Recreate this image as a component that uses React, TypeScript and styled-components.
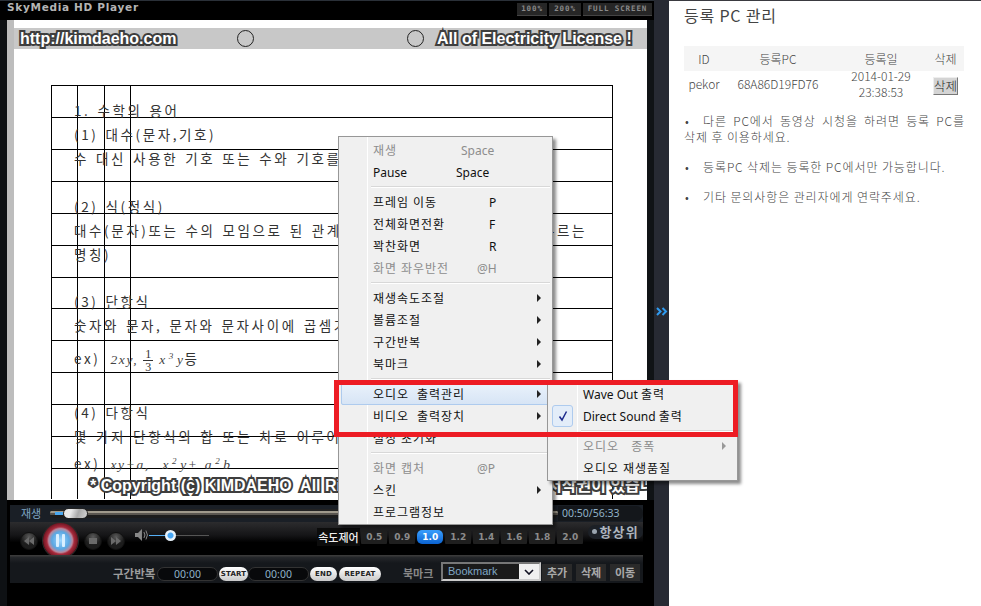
import React from "react";
import styled, { createGlobalStyle } from "styled-components";

const KR = `"Noto Sans CJK KR", "Noto Sans", sans-serif`;

const GlobalStyle = createGlobalStyle`
  html, body {
    margin: 0;
    padding: 0;
    background: #fff;
    overflow: hidden;
    font-family: ${KR};
  }
`;

const Screen = styled.div`
  position: relative;
  width: 981px;
  height: 606px;
  overflow: hidden;
  display: flex;
  background: #fff;
`;

/* ---------- player ---------- */
const Player = styled.div`
  width: 654px;
  flex: none;
  display: flex;
  flex-direction: column;
  background: #000;
`;

const TitleBar = styled.div`
  height: 20px;
  flex: none;
  display: flex;
  align-items: flex-start;
  justify-content: space-between;
  background: linear-gradient(#2a3038 0 1px, #000 1px);
  padding: 0 2px 0 7px;
`;

const TitleText = styled.span`
  font: bold 10.5px/14px "DejaVu Sans", sans-serif;
  letter-spacing: 0.7px;
  color: #b4b4b4;
`;

const SizeButtons = styled.div`
  display: flex;
  gap: 2px;
  margin-top: 3px;
`;

const SizeButton = styled.span<{ $w: number }>`
  width: ${(p) => p.$w}px;
  height: 12px;
  background: #262626;
  border-bottom: 1px solid #444;
  font: bold 7.5px/12px "DejaVu Sans Mono", monospace;
  letter-spacing: 0.9px;
  color: #8a8a8a;
  text-align: center;
  white-space: pre;
`;

const Stage = styled.div`
  height: 480px;
  flex: none;
  display: flex;
`;

const LeftEdge = styled.div`
  width: 7px;
  flex: none;
  background: #0e1114;
`;

const GrayEdge = styled.div`
  width: 7px;
  flex: none;
  background: #bdbdbd;
`;

const PageArea = styled.div`
  position: relative;
  width: 633px;
  flex: none;
  background: #fff;
  overflow: hidden;
  padding-top: 8px;
`;

const RightEdge = styled.div`
  flex: 1;
  background: #101316;
`;

const WatermarkBand = styled.div`
  height: 21px;
  background: #c8c8c8;
  display: grid;
  grid-template-columns: 217px 170px 30px 1fr;
  align-items: center;
  padding-left: 6px;
`;

const Stamp = styled.span`
  font: bold 16px/21px "Liberation Sans", ${KR};
  color: #fff;
  -webkit-text-stroke: 4px #3e3e3e;
  stroke-linejoin: round;
  paint-order: stroke fill;
  white-space: pre;
`;

const Ring = styled.span`
  width: 17px;
  height: 17px;
  border-radius: 50%;
  border: 1px solid #222;
  box-sizing: border-box;
`;

const DocTable = styled.div`
  margin: 36px 0 0 37px;
  width: 562px;
  height: 414px;
  box-sizing: border-box;
  padding: 13px 0 0 23px;
  border-right: 1px solid #000;
  color: #333;
  background-image:
    linear-gradient(#000, #000), linear-gradient(#000, #000),
    linear-gradient(#000, #000), linear-gradient(#000, #000),
    repeating-linear-gradient(#000 0 1px, transparent 1px 31.92px);
  background-size: 1px 100%, 1px 100%, 1px 100%, 1px 100%, 100% 100%;
  background-position: 0 0, 26px 0, 53px 0, 79px 0, 0 0;
  background-repeat: no-repeat;
`;

const DocLine = styled.div<{ $top?: number }>`
  height: 24px;
  margin-top: ${(p) => p.$top ?? 0}px;
  font: 400 13.5px/24px ${KR};
  letter-spacing: 2.6px;
  word-spacing: 1.4px;
  white-space: pre;
`;

const MathText = styled.span`
  font: italic 13.5px/24px "Liberation Serif", serif;
  letter-spacing: 1.6px;
  margin-left: 3px;
  color: #444;
`;

const Fraction = styled.span`
  display: inline-flex;
  flex-direction: column;
  vertical-align: middle;
  font: 12px/12px "Liberation Serif", serif;
  text-align: center;
  margin: 0 3px 0 5px;
  letter-spacing: 0;
  span:first-child {
    border-bottom: 1px solid #333;
    padding: 0 2px;
  }
`;

const Sup = styled.sup`
  font-size: 9px;
  line-height: 0;
  margin: 0 2px;
`;

const CopyrightStamp = styled(Stamp)`
  position: absolute;
  left: 76px;
  top: 455px;
`;

/* ---------- controls ---------- */
const Controls = styled.div`
  flex: 1;
  display: flex;
  flex-direction: column;
  padding: 5px 11px 0 10px;
  background: linear-gradient(90deg, #0e1114 0 7px, #000 7px);
`;

const SeekRow = styled.div`
  height: 17px;
  display: flex;
  align-items: center;
  background: #1a1f26;
`;

const SeekLabel = styled.span`
  width: 40px;
  padding-left: 11px;
  box-sizing: border-box;
  font: 11px/17px ${KR};
  color: #7fa6c4;
`;

const SeekTrack = styled.div`
  position: relative;
  flex: 1;
  height: 9px;
  border-radius: 5px;
  background: linear-gradient(#222 0 2px, #a09a8c 2px 4px, #5a5650 4px 6px, #1c1c1c 6px);
`;

const SeekKnob = styled.span`
  position: absolute;
  left: 13px;
  top: -1px;
  width: 25px;
  height: 11px;
  box-sizing: border-box;
  border-radius: 6px;
  border: 1px solid #222;
  background: linear-gradient(110deg, #e8e8e8 30%, #a8a8a8 60%, #d4d4d4);
`;

const SeekFill = styled.span`
  position: absolute;
  left: 5px;
  top: 3px;
  width: 8px;
  height: 3px;
  background: #4aa8f0;
`;

const TimeText = styled.span`
  width: 85px;
  padding-left: 4px;
  box-sizing: border-box;
  height: 15px;
  border-radius: 0 7px 7px 0;
  background: #14171b;
  font: 10.5px/15px "Noto Sans", sans-serif;
  color: #8fb0c6;
`;

const TransportRow = styled.div`
  height: 33px;
  flex: none;
  display: flex;
  align-items: center;
  background: linear-gradient(#2c2c2e, #151517 40%, #000 62%);
`;

const RoundButton = styled.span<{ $ml: number }>`
  width: 18px;
  height: 18px;
  margin-left: ${(p) => p.$ml}px;
  margin-top: 4px;
  flex: none;
  border-radius: 50%;
  background: radial-gradient(circle at 50% 25%, #5a5a5a, #1c1c1c 55%);
  border: 1px solid #111;
  box-sizing: border-box;
  display: flex;
  align-items: center;
  justify-content: center;
`;

const PlayButton = styled.span`
  width: 35px;
  height: 35px;
  margin-left: 5px;
  margin-top: 4px;
  flex: none;
  box-sizing: border-box;
  border-radius: 50%;
  box-shadow: 0 0 0 1px #2a2a2a;
  background: radial-gradient(circle closest-side, #9fd8ff 0, #5aa7e2 50%, #b98a9e 68%, #a82a3c 78%, #6e1622 100%);
  display: flex;
  align-items: center;
  justify-content: center;
  gap: 3px;
  span {
    width: 3px;
    height: 13px;
    background: #d8efff;
    border-radius: 1px;
  }
`;

const VolumeTrack = styled.div`
  position: relative;
  width: 60px;
  height: 1px;
  margin: -7px 0 0 1px;
  background: linear-gradient(90deg, #56b0f5 0 20px, #555 20px);
`;

const VolumeKnob = styled.span`
  position: absolute;
  left: 16px;
  top: -5px;
  width: 11px;
  height: 11px;
  box-sizing: border-box;
  border-radius: 50%;
  background: radial-gradient(circle, #46a6f5 0 2.5px, #e8f2fa 3.5px);
`;

const SpeedLabel = styled.span`
  margin: -3px 0 0 108px;
  width: 44px;
  font: 500 11px/18px ${KR};
  color: #eee;
  background: #0c0c0c;
  text-align: center;
`;

const SpeedGroup = styled.div`
  display: flex;
  gap: 2px;
  margin-left: 1px;
  margin-top: -3px;
`;

const SpeedButton = styled.span<{ $on?: boolean }>`
  width: 26px;
  height: 14px;
  border-radius: ${(p) => (p.$on ? 5 : 1)}px;
  background: ${(p) => (p.$on ? "linear-gradient(#3aa0ff, #0b62d0)" : "#1f1f1f")};
  font: bold 9px/14px "DejaVu Sans", sans-serif;
  color: ${(p) => (p.$on ? "#fff" : "#8c8c8c")};
  text-align: center;
`;

const TopMost = styled.span`
  margin: -14px 0 0 5px;
  width: 55px;
  height: 14px;
  border-radius: 7px;
  background: #1c2026;
  font: 700 13px/14px ${KR};
  letter-spacing: 1.2px;
  color: #aeb5bd;
  text-align: center;
  white-space: pre;
  display: flex;
  align-items: center;
  justify-content: center;
  gap: 2px;
`;

const PinDot = styled.span`
  width: 5px;
  height: 5px;
  border-radius: 50%;
  background: #9aa4ae;
`;

const RepeatRow = styled.div`
  height: 28px;
  flex: none;
  box-sizing: border-box;
  padding-bottom: 2px;
  display: flex;
  align-items: flex-end;
  background: linear-gradient(#3a3a3a 0 1px, #26282b 2px, #15181c 8px);
`;

const RepeatLabel = styled.span`
  margin-left: 103px;
  width: 44px;
  font: bold 11.5px/16px ${KR};
  color: #9c9c9c;
  white-space: pre;
`;

const TimePill = styled.span`
  width: 61px;
  height: 14px;
  box-sizing: border-box;
  border: 1px solid #333;
  border-radius: 7px;
  background: #08090b;
  font: 10.5px/12px "Noto Sans", sans-serif;
  color: #8fb0c6;
  text-align: center;
`;

const WhitePill = styled.span<{ $w: number; $ml?: number }>`
  width: ${(p) => p.$w}px;
  height: 14px;
  margin-left: ${(p) => p.$ml ?? 1}px;
  border-radius: 7px;
  background: linear-gradient(#fff, #c9c9c9);
  font: bold 7px/14px "DejaVu Sans", sans-serif;
  letter-spacing: 0.2px;
  color: #222;
  text-align: center;
`;

const MarkLabel = styled.span`
  margin-left: 22px;
  width: 38px;
  font: bold 11px/16px ${KR};
  color: #888;
`;

const MarkSelect = styled.span`
  width: 100px;
  height: 19px;
  box-sizing: border-box;
  border: 2px solid #777;
  border-right-color: #ccc;
  border-bottom-color: #ccc;
  display: flex;
  background: #1a1a1a;
  font: 11px/15px "Liberation Sans", sans-serif;
  color: #7fa6c4;
  padding-left: 5px;
  justify-content: space-between;
`;

const MarkArrow = styled.span`
  width: 20px;
  background: #f0f0f0;
  display: flex;
  align-items: center;
  justify-content: center;
`;

const MarkButton = styled.span<{ $ml: number }>`
  width: 30px;
  height: 17px;
  margin-left: ${(p) => p.$ml}px;
  background: #2a2a2a;
  font: bold 11px/17px ${KR};
  color: #aaa;
  text-align: center;
`;

/* ---------- collapse strip ---------- */
const Strip = styled.div`
  width: 15px;
  flex: none;
  background: #272a33;
  display: flex;
  align-items: center;
  justify-content: center;
  padding-top: 16px;
  box-sizing: border-box;
`;

/* ---------- side panel ---------- */
const Panel = styled.div`
  flex: 1;
  padding: 4px 17px 0 15px;
  border-top: 1px solid #3a3a40;
`;

const PanelTitle = styled.h2`
  margin: 0 0 21px;
  font: 400 16px/20px ${KR};
  letter-spacing: 0.8px;
  color: #444;
  white-space: pre;
`;

const PcTable = styled.table`
  width: 280px;
  border-collapse: collapse;
  table-layout: fixed;
  font: 300 12px/16px ${KR};
  color: #444;
  th {
    font-weight: 300;
    height: 25px;
    padding: 0;
    background: #f5f5f5;
  }
  td {
    height: 26px;
    padding: 0;
    text-align: center;
  }
  th:last-child,
  td:last-child {
    padding-right: 3px;
  }
`;

const DateCell = styled.div`
  margin: -3px 0;
`;

const DeleteButton = styled.span`
  display: inline-block;
  width: 25px;
  height: 18px;
  box-sizing: border-box;
  border: 1px solid #777;
  border-top-color: #eee;
  border-left-color: #eee;
  background: #d4d4d4;
  font: 300 12.5px/16px ${KR};
  color: #222;
  vertical-align: middle;
  margin-top: 3px;
`;

const Notes = styled.div`
  margin-top: 16px;
  font: 300 12px/16px ${KR};
  letter-spacing: 0.9px;
  color: #444;
  white-space: pre;
`;

const Note = styled.p`
  margin: 0 0 14px;
`;

const WideLine = styled.span`
  word-spacing: 2.7px;
`;

const Bullet = styled.span`
  display: inline-block;
  width: 19px;
  padding-left: 1px;
  box-sizing: border-box;
`;

/* ---------- context menu ---------- */
const Menu = styled.div<{ $x: number; $y: number; $w: number; $gutter: number }>`
  position: absolute;
  left: ${(p) => p.$x}px;
  top: ${(p) => p.$y}px;
  width: ${(p) => p.$w}px;
  box-sizing: border-box;
  padding: 2px 2px 1px;
  background: linear-gradient(90deg, transparent ${(p) => p.$gutter}px, #fff ${(p) => p.$gutter}px, #fff ${(p) => p.$gutter + 1}px, transparent ${(p) => p.$gutter + 1}px) #f0f0f0;
  border: 1px solid #979797;
  box-shadow: 3px 3px 3px rgba(0, 0, 0, 0.45);
  font: 400 12px/24px "Noto Sans", ${KR};
`;

const Item = styled.div<{ $off?: boolean; $hot?: boolean; $left: number }>`
  position: relative;
  height: 22px;
  box-sizing: border-box;
  padding-left: ${(p) => p.$left}px;
  display: flex;
  white-space: pre;
  letter-spacing: 0.95px;
  color: ${(p) => (p.$off ? "#8d8d8d" : "#111")};
  ${(p) =>
    p.$hot &&
    `
    background: linear-gradient(#eaf2fb, #d6e4f5);
    outline: 1px solid #aecbee;
    outline-offset: -1px;
    border-radius: 2px;
  `}
`;

const Latin = styled.span`
  letter-spacing: 0;
`;

const Shortcut = styled.span<{ $indent: number }>`
  position: absolute;
  left: ${(p) => 115 + p.$indent}px;
  letter-spacing: 0;
`;

const SubArrow = styled.span<{ $off?: boolean }>`
  position: absolute;
  right: 9px;
  top: 7px;
  width: 0;
  height: 0;
  border-left: 4px solid ${(p) => (p.$off ? "#999" : "#222")};
  border-top: 4px solid transparent;
  border-bottom: 4px solid transparent;
`;

const Separator = styled.div<{ $left: number }>`
  height: 8px;
  margin-left: ${(p) => p.$left}px;
  display: flex;
  flex-direction: column;
  justify-content: center;
  &::before {
    content: "";
    height: 1px;
    background: #d8d8d8;
    border-bottom: 1px solid #fff;
  }
`;

const CheckBox = styled.span`
  position: absolute;
  left: 2px;
  top: 0;
  width: 21px;
  height: 22px;
  box-sizing: border-box;
  border: 1px solid #aecbee;
  border-radius: 3px;
  background: #e3edf9;
  display: flex;
  align-items: center;
  justify-content: center;
`;

const RedFrame = styled.div`
  position: absolute;
  left: 334px;
  top: 380px;
  width: 404px;
  height: 57px;
  box-sizing: border-box;
  border: 5px solid #ed1c24;
  pointer-events: none;
`;

const GlyphButton = ({ d, ml }: { d: string; ml: number }) => (
  <RoundButton $ml={ml}>
    <svg width="10" height="8" viewBox="0 0 10 8">
      <path d={d} fill="#6a6a6a" />
    </svg>
  </RoundButton>
);

const speeds = ["0.5", "0.9", "1.0", "1.2", "1.4", "1.6", "1.8", "2.0"];

export default function App() {
  return (
    <Screen>
      <GlobalStyle />
      <Player>
        <TitleBar>
          <TitleText>SkyMedia HD Player</TitleText>
          <SizeButtons>
            <SizeButton $w={30}>100%</SizeButton>
            <SizeButton $w={32}>200%</SizeButton>
            <SizeButton $w={69}>FULL SCREEN</SizeButton>
          </SizeButtons>
        </TitleBar>
        <Stage>
          <LeftEdge />
          <GrayEdge />
          <PageArea>
            <WatermarkBand>
              <Stamp>http://kimdaeho.com</Stamp>
              <Ring />
              <Ring />
              <Stamp>All of Electricity License !</Stamp>
            </WatermarkBand>
            <DocTable>
              <DocLine>1. 수학의 용어</DocLine>
              <DocLine>(1) 대수(문자,기호)</DocLine>
              <DocLine>수 대신 사용한 기호 또는 수와 기호를</DocLine>
              <DocLine $top={24}>(2) 식(정식)</DocLine>
              <DocLine>대수(문자)또는 수의 모임으로 된 관계를 하나의 기호로 묶어 식이 부르는</DocLine>
              <DocLine>명칭)</DocLine>
              <DocLine $top={23}>(3) 단항식</DocLine>
              <DocLine>숫자와 문자, 문자와 문자사이에 곱셈기호</DocLine>
              <DocLine $top={9}>
                ex) <MathText>2xy,</MathText>
                <Fraction>
                  <span>1</span>
                  <span>3</span>
                </Fraction>
                <MathText>
                  x<Sup>3</Sup>y
                </MathText>
                등
              </DocLine>
              <DocLine $top={30}>(4) 다항식</DocLine>
              <DocLine>몇 가지 단항식의 합 또는 차로 이루어진</DocLine>
              <DocLine $top={3}>
                ex) <MathText>xy+a,  x<Sup>2</Sup>y+ a<Sup>2</Sup>b</MathText>
              </DocLine>
            </DocTable>
            <CopyrightStamp>* Copyright (c) KIMDAEHO  All Rights Reserved. 이 글은 모든 저작권이 있습니다</CopyrightStamp>
          </PageArea>
          <RightEdge />
        </Stage>
        <Controls>
          <SeekRow>
            <SeekLabel>재생</SeekLabel>
            <SeekTrack>
              <SeekFill />
              <SeekKnob />
            </SeekTrack>
            <TimeText>00:50/56:33</TimeText>
          </SeekRow>
          <TransportRow>
            <GlyphButton ml={10} d="M0 4 5 0v8zM5 4l5-4v8z" />
            <PlayButton>
              <span />
              <span />
            </PlayButton>
            <GlyphButton ml={6} d="M1 1h8v6H1z" />
            <GlyphButton ml={5} d="M0 0l5 4-5 4zM5 0l5 4-5 4z" />
            <svg width="13" height="12" viewBox="0 0 13 12" style={{ marginLeft: 10, marginTop: -7 }}>
              <path d="M0 4h3l4-4v12L3 8H0z" fill="#888" />
              <path d="M9 3q2 3 0 6M11 1.5q3 4.500 0 9" stroke="#888" fill="none" />
            </svg>
            <VolumeTrack>
              <VolumeKnob />
            </VolumeTrack>
            <SpeedLabel>속도제어</SpeedLabel>
            <SpeedGroup>
              {speeds.map((s) => (
                <SpeedButton key={s} $on={s === "1.0"}>
                  {s}
                </SpeedButton>
              ))}
            </SpeedGroup>
            <TopMost>
              <PinDot />
              항상위
            </TopMost>
          </TransportRow>
          <RepeatRow>
            <RepeatLabel>구간반복</RepeatLabel>
            <TimePill>00:00</TimePill>
            <WhitePill $w={29}>START</WhitePill>
            <TimePill>00:00</TimePill>
            <WhitePill $w={27}>END</WhitePill>
            <WhitePill $w={42} $ml={2}>
              REPEAT
            </WhitePill>
            <MarkLabel>북마크</MarkLabel>
            <MarkSelect>
              Bookmark
              <MarkArrow>
                <svg width="10" height="6" viewBox="0 0 10 6">
                  <path d="M1 1l4 4 4-4" stroke="#112" strokeWidth="1.600" fill="none" />
                </svg>
              </MarkArrow>
            </MarkSelect>
            <MarkButton $ml={1}>추가</MarkButton>
            <MarkButton $ml={4}>삭제</MarkButton>
            <MarkButton $ml={4}>이동</MarkButton>
          </RepeatRow>
        </Controls>
      </Player>
      <Strip>
        <svg width="12" height="9" viewBox="0 0 12 9">
          <path d="M1 1l3.500 3.500L1 8M6.500 1 10 4.500 6.500 8" stroke="#2f9bf0" strokeWidth="2" fill="none" />
        </svg>
      </Strip>
      <Panel>
        <PanelTitle>등록 PC 관리</PanelTitle>
        <PcTable>
          <colgroup>
            <col style={{ width: 40 }} />
            <col style={{ width: 108 }} />
            <col style={{ width: 98 }} />
            <col style={{ width: 34 }} />
          </colgroup>
          <thead>
            <tr>
              <th>ID</th>
              <th>등록PC</th>
              <th>등록일</th>
              <th>삭제</th>
            </tr>
          </thead>
          <tbody>
            <tr>
              <td>pekor</td>
              <td>68A86D19FD76</td>
              <td>
                <DateCell>
                  2014-01-29
                  <br />
                  23:38:53
                </DateCell>
              </td>
              <td>
                <DeleteButton>삭제</DeleteButton>
              </td>
            </tr>
          </tbody>
        </PcTable>
        <Notes>
          <Note>
            <Bullet>•</Bullet>
            <WideLine>다른 PC에서 동영상 시청을 하려면 등록 PC를</WideLine>
            <br />
            삭제 후 이용하세요.
          </Note>
          <Note>
            <Bullet>•</Bullet>등록PC 삭제는 등록한 PC에서만 가능합니다.
          </Note>
          <Note>
            <Bullet>•</Bullet>기타 문의사항은 관리자에게 연락주세요.
          </Note>
        </Notes>
      </Panel>

      <Menu $x={338} $y={136} $w={215} $gutter={28}>
        <Item $left={32} $off>
          재생<Shortcut $indent={5}>Space</Shortcut>
        </Item>
        <Item $left={32}>
          <Latin>Pause</Latin>
          <Shortcut $indent={0}>Space</Shortcut>
        </Item>
        <Separator $left={30} />
        <Item $left={32}>
          프레임 이동<Shortcut $indent={33}>P</Shortcut>
        </Item>
        <Item $left={32}>
          전체화면전환<Shortcut $indent={33}>F</Shortcut>
        </Item>
        <Item $left={32}>
          꽉찬화면<Shortcut $indent={33}>R</Shortcut>
        </Item>
        <Item $left={32} $off>
          화면 좌우반전<Shortcut $indent={21}>@H</Shortcut>
        </Item>
        <Separator $left={30} />
        {["재생속도조절", "볼륨조절", "구간반복", "북마크"].map((t) => (
          <Item $left={32} key={t}>
            {t}
            <SubArrow />
          </Item>
        ))}
        <Separator $left={30} />
        <Item $left={32} $hot>
          오디오  출력관리
          <SubArrow />
        </Item>
        <Item $left={32}>
          비디오  출력장치
          <SubArrow />
        </Item>
        <Item $left={32}>설정 초기화</Item>
        <Separator $left={30} />
        <Item $left={32} $off>
          화면 캡처<Shortcut $indent={21}>@P</Shortcut>
        </Item>
        <Item $left={32}>
          스킨
          <SubArrow />
        </Item>
        <Item $left={32}>프로그램정보</Item>
      </Menu>

      <Menu $x={547} $y={380} $w={191} $gutter={29}>
        <Item $left={33}>
          <Latin>Wave Out </Latin>출력
        </Item>
        <Item $left={33}>
          <CheckBox>
            <svg width="12" height="12" viewBox="0 0 12 12">
              <path d="M2.500 6.500 5 10l4.500-8.500" stroke="#1c2a8c" strokeWidth="1.500" fill="none" />
            </svg>
          </CheckBox>
          <Latin>Direct Sound </Latin>출력
        </Item>
        <Separator $left={31} />
        <Item $left={33} $off>
          오디오   종폭
          <SubArrow $off />
        </Item>
        <Item $left={33}>오디오 재생품질</Item>
      </Menu>

      <RedFrame />
    </Screen>
  );
}
